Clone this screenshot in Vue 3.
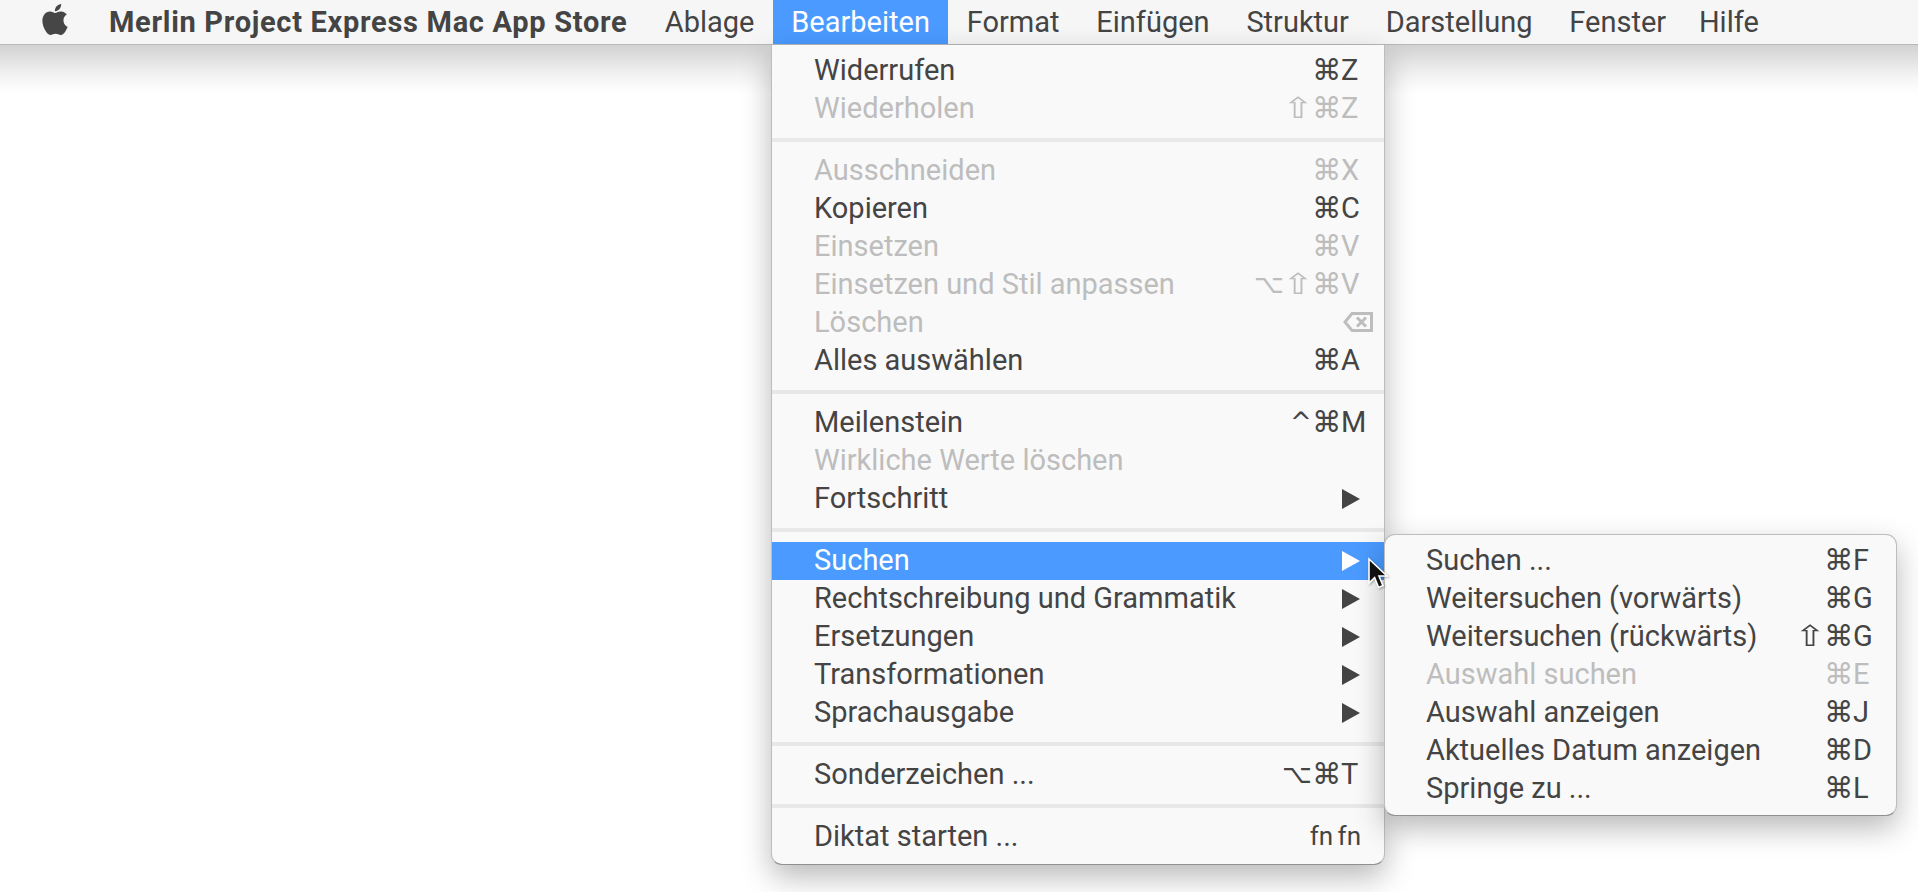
<script setup>
const barItems = ['Ablage', 'Bearbeiten', 'Format', 'Einfügen', 'Struktur', 'Darstellung', 'Fenster', 'Hilfe']

const mainMenu = [
  [
    { label: 'Widerrufen', mods: '⌘', key: 'Z' },
    { label: 'Wiederholen', mods: '⇧⌘', key: 'Z', off: true }
  ],
  [
    { label: 'Ausschneiden', mods: '⌘', key: 'X', off: true },
    { label: 'Kopieren', mods: '⌘', key: 'C' },
    { label: 'Einsetzen', mods: '⌘', key: 'V', off: true },
    { label: 'Einsetzen und Stil anpassen', mods: '⌥⇧⌘', key: 'V', off: true },
    { label: 'Löschen', icon: 'delete', off: true },
    { label: 'Alles auswählen', mods: '⌘', key: 'A' }
  ],
  [
    { label: 'Meilenstein', mods: '^⌘', key: 'M' },
    { label: 'Wirkliche Werte löschen', off: true },
    { label: 'Fortschritt', icon: 'arrow' }
  ],
  [
    { label: 'Suchen', icon: 'arrow', active: true },
    { label: 'Rechtschreibung und Grammatik', icon: 'arrow' },
    { label: 'Ersetzungen', icon: 'arrow' },
    { label: 'Transformationen', icon: 'arrow' },
    { label: 'Sprachausgabe', icon: 'arrow' }
  ],
  [{ label: 'Sonderzeichen ...', mods: '⌥⌘', key: 'T' }],
  [{ label: 'Diktat starten ...', fn: 'fn fn' }]
]

const subMenu = [
  { label: 'Suchen ...', mods: '⌘', key: 'F' },
  { label: 'Weitersuchen (vorwärts)', mods: '⌘', key: 'G' },
  { label: 'Weitersuchen (rückwärts)', mods: '⇧⌘', key: 'G' },
  { label: 'Auswahl suchen', mods: '⌘', key: 'E', off: true },
  { label: 'Auswahl anzeigen', mods: '⌘', key: 'J' },
  { label: 'Aktuelles Datum anzeigen', mods: '⌘', key: 'D' },
  { label: 'Springe zu ...', mods: '⌘', key: 'L' }
]

const glyphClass = { '⌘': 'cmd', '⇧': 'shift', '⌥': 'opt', '^': 'ctrl' }
</script>

<template>
  <div class="screen">
    <header class="bar">
      <svg class="apple" viewBox="2 0 20 24" aria-hidden="true">
        <path d="M12.152 6.896c-.948 0-2.415-1.078-3.96-1.04-2.04.027-3.91 1.183-4.961 3.014-2.117 3.675-.546 9.103 1.519 12.09 1.013 1.454 2.208 3.09 3.792 3.039 1.52-.065 2.09-.987 3.935-.987 1.831 0 2.35.987 3.96.948 1.637-.026 2.676-1.48 3.676-2.948 1.156-1.688 1.636-3.325 1.662-3.415-.039-.013-3.182-1.221-3.22-4.857-.026-3.04 2.48-4.494 2.597-4.559-1.429-2.09-3.623-2.324-4.39-2.376-2-.156-3.675 1.09-4.61 1.09zM15.53 3.83c.843-1.012 1.4-2.427 1.245-3.83-1.207.052-2.662.805-3.532 1.818-.78.896-1.454 2.338-1.273 3.714 1.338.104 2.715-.688 3.559-1.701" />
      </svg>
      <span class="bar-item app-name">Merlin Project Express Mac App Store</span>
      <span
        v-for="item in barItems"
        :key="item"
        class="bar-item"
        :class="{ open: item === 'Bearbeiten', last: item === 'Hilfe' }"
      >{{ item }}</span>
    </header>

    <div class="desk"></div>

    <nav class="menu main">
      <template v-for="(group, g) in mainMenu" :key="g">
        <div v-if="g > 0" class="sep"></div>
        <div
          v-for="row in group"
          :key="row.label"
          class="row"
          :class="{ off: row.off, active: row.active }"
        >
          <span class="label">{{ row.label }}</span>
          <span v-if="row.fn" class="fn">{{ row.fn }}</span>
          <template v-else>
            <span class="mods">
              <span v-for="c in (row.mods || '')" :key="c" class="mod" :class="glyphClass[c]">{{ c }}</span>
            </span>
            <span class="key">
              {{ row.key }}
              <svg v-if="row.icon === 'arrow'" class="arrow" viewBox="0 0 18 20" aria-hidden="true">
                <polygon points="0,0 18,10 0,20" />
              </svg>
              <svg v-if="row.icon === 'delete'" class="del" viewBox="0 0 30 20" aria-hidden="true">
                <path d="M9 1.5H28.5V18.5H9L2 10Z M14 5.5L23 14.5M23 5.5L14 14.5" />
              </svg>
            </span>
          </template>
        </div>
      </template>
    </nav>

    <nav class="menu sub">
      <div v-for="row in subMenu" :key="row.label" class="row" :class="{ off: row.off }">
        <span class="label">{{ row.label }}</span>
        <span class="mods">
          <span v-for="c in row.mods" :key="c" class="mod" :class="glyphClass[c]">{{ c }}</span>
        </span>
        <span class="key">{{ row.key }}</span>
      </div>
    </nav>

    <svg class="cursor" viewBox="0 0 24 34" aria-hidden="true">
      <path d="M2 2V26L7.6 20.6L11.6 30.5L16 28.6L12 19H20Z" />
    </svg>
  </div>
</template>

<style scoped>
.screen {
  position: relative;
  height: 892px;
  overflow: hidden;
  background: #fff;
  color: #444;
  font-family: Roboto, "Liberation Sans", sans-serif;
  font-size: 29px;
}

.bar {
  display: flex;
  align-items: stretch;
  box-sizing: border-box;
  height: 45px;
  padding-left: 42px;
  background: #f6f6f6;
  border-bottom: 1px solid #b8b8b8;
}

.apple {
  width: 26px;
  height: 31px;
  margin: 4px 22.6px 0 0;
  fill: #464646;
}

.bar-item {
  padding: 0 18.4px;
  line-height: 44px;
}

.app-name {
  padding-right: 19px;
  font-weight: 700;
  letter-spacing: 0.7px;
}

.last {
  margin-left: -4px;
}

.open {
  background: #4a9aff;
  color: #fff;
}

.desk {
  height: 60px;
  background: linear-gradient(#d2d2d2, #dcdcdc 10px, #e8e8e8 20px, #f4f4f4 32px, #fff 48px);
}

.menu {
  position: absolute;
  box-sizing: border-box;
  background: #f9f9f9;
  border: 1px solid rgba(0, 0, 0, 0.24);
  border-bottom-color: rgba(0, 0, 0, 0.42);
  box-shadow: 0 12px 30px rgba(0, 0, 0, 0.28);
}

.main {
  left: 771px;
  top: 45px;
  width: 614px;
  padding: 7px 0 8px;
  border-top: 0;
  border-radius: 0 0 11px 11px;
}

.sub {
  left: 1384px;
  top: 534px;
  width: 513px;
  padding: 7px 0;
  border-radius: 11px;
}

.row {
  display: grid;
  grid-template-columns: 1fr auto 43px;
  align-items: center;
  box-sizing: border-box;
  height: 38px;
  padding: 0 0 2px 42px;
  line-height: 36px;
}

.sub .row {
  padding-left: 41px;
}

.sep {
  height: 4px;
  margin: 10px 0;
  background: #e8e8e8;
}

.off {
  color: #bdbdbd;
}

.active {
  background: #4a9aff;
  color: #fff;
}

.mods {
  display: flex;
  margin-right: 1px;
  font-family: "DejaVu Sans", sans-serif;
}

.mod {
  width: 28px;
  text-align: center;
  font-size: 29px;
}

.shift {
  font-size: 29px;
  transform: scaleX(1.3);
}

.opt {
  width: 30px;
  font-size: 26px;
  text-align: left;
}

.ctrl {
  width: 22px;
  font-size: 26px;
}

.key {
  display: flex;
  align-items: center;
  height: 36px;
}

.arrow {
  width: 18px;
  height: 20px;
  margin: 2px 0 0 1px;
  fill: currentColor;
}

.del {
  width: 30px;
  height: 20px;
  margin-left: 2px;
  fill: none;
  stroke: currentColor;
  stroke-width: 3;
}

.fn {
  grid-column: 2 / 4;
  margin-right: 23px;
  font-size: 26px;
  word-spacing: -2px;
}

.cursor {
  position: absolute;
  left: 1367px;
  top: 557px;
  width: 24px;
  height: 34px;
  fill: #111;
  stroke: #fff;
  stroke-width: 1.6;
  filter: drop-shadow(1px 1px 1px rgba(0, 0, 0, 0.3));
}
</style>
